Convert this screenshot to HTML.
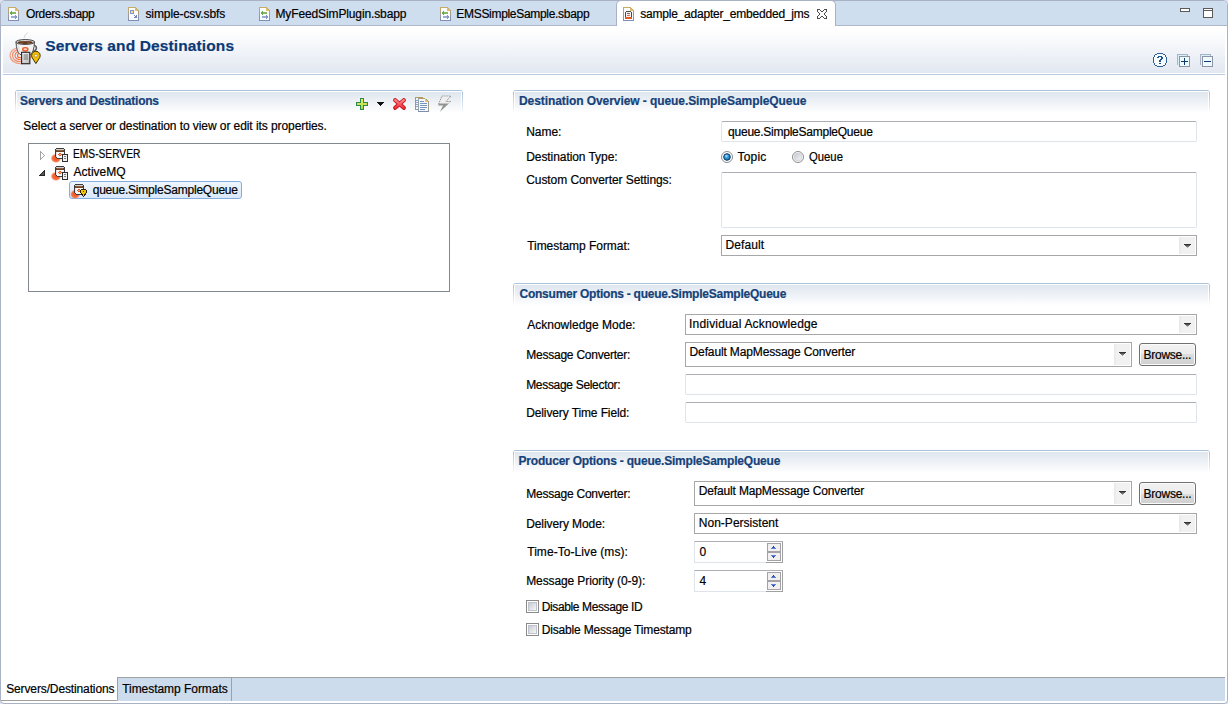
<!DOCTYPE html>
<html><head><meta charset="utf-8"><title>Servers and Destinations</title>
<style>
html,body{margin:0;padding:0;width:1228px;height:704px;overflow:hidden;background:#dfe3ee;position:relative;font-family:"Liberation Sans",sans-serif;font-size:12px;color:#000}
.a{position:absolute;box-sizing:border-box}
.t{position:absolute;white-space:nowrap;line-height:15px;font-size:12px;-webkit-text-stroke:0.2px currentColor}
svg{position:absolute;overflow:visible}
.sec{position:absolute;box-sizing:border-box;height:23px;border-top:1px solid #abc2db;border-radius:3px 3px 0 0;background:linear-gradient(90deg,#fff 0,#fff 2px,rgba(255,255,255,0) 2px,rgba(255,255,255,0) calc(100% - 2px),#fff calc(100% - 2px)),linear-gradient(#fff 0,#fff 1px,#dfe6ef 1px,#fff 22px)}
.sec:before,.sec:after{content:"";position:absolute;top:1px;width:1px;height:22px;background:linear-gradient(#a9c0da,rgba(169,192,218,0))}
.sec:before{left:0}.sec:after{right:0}
.tf{position:absolute;box-sizing:border-box;border:1px solid #dfe3ea;border-top-color:#abadb3;border-radius:2px;background:#fff}
.cb{position:absolute;box-sizing:border-box;border:1px solid #a7a7a7;background:#fff}
.dd{position:absolute;box-sizing:border-box;background:linear-gradient(90deg,#e8e8e8,#f1f1f1 3px,#f1f1f1)}
.btn{position:absolute;box-sizing:border-box;border:1px solid #707070;border-radius:3px;background:linear-gradient(#f2f2f2 0,#ebebeb 50%,#dddddd 50%,#cfcfcf 100%);box-shadow:inset 0 0 0 1px #fcfcfc}

</style></head><body>
<!-- frame -->
<div class="a" style="left:0;top:0;width:1228px;height:704px;border:1px solid #a9b1c5;border-radius:5px 5px 4px 4px;background:#fff"></div>
<!-- top tab bar -->
<div class="a" style="left:1px;top:1px;width:1226px;height:25px;background:#cfdeef;border-bottom:1px solid #aeb8cb;border-radius:4px 4px 0 0"></div>
<!-- active tab -->
<div class="a" style="left:616px;top:0;width:220px;height:26px;background:#fff;border:1px solid #a9b1c5;border-bottom:none;border-radius:5px 5px 0 0"></div>

<!-- tab icons -->
<svg style="left:8px;top:7px" width="11" height="14" viewBox="0 0 11 14" shape-rendering="crispEdges"><path d="M0 0h8v1h-8z" fill="#c8ac64"/><path d="M8 1h1v1h-1z" fill="#c4aa68"/><path d="M9 2h1v1h-1z" fill="#c0a96c"/><path d="M0 1h1v1h-1z" fill="#c2a96a"/><path d="M0 2h1v1h-1z" fill="#bca770"/><path d="M0 3h1v1h-1z" fill="#b7a577"/><path d="M10 3h1v1h-1z" fill="#b7a577"/><path d="M0 4h1v1h-1z" fill="#b1a27d"/><path d="M10 4h1v1h-1z" fill="#b1a27d"/><path d="M0 5h1v1h-1z" fill="#aca084"/><path d="M10 5h1v1h-1z" fill="#aca084"/><path d="M0 6h1v1h-1z" fill="#a69e8a"/><path d="M10 6h1v1h-1z" fill="#a69e8a"/><path d="M0 7h1v1h-1z" fill="#a19b91"/><path d="M10 7h1v1h-1z" fill="#a19b91"/><path d="M0 8h1v1h-1z" fill="#9b9997"/><path d="M10 8h1v1h-1z" fill="#9b9997"/><path d="M0 9h1v1h-1z" fill="#96979e"/><path d="M10 9h1v1h-1z" fill="#96979e"/><path d="M0 10h1v1h-1z" fill="#9094a4"/><path d="M10 10h1v1h-1z" fill="#9094a4"/><path d="M0 11h1v1h-1z" fill="#8b92ab"/><path d="M10 11h1v1h-1z" fill="#8b92ab"/><path d="M0 12h1v1h-1z" fill="#8590b1"/><path d="M10 12h1v1h-1z" fill="#8590b1"/><path d="M0 13h1v1h-1z" fill="#808eb8"/><path d="M10 13h1v1h-1z" fill="#808eb8"/><path d="M0 13h11v1h-11z" fill="#808eb8"/><path d="M1 1h7v12h-7z M8 2h1v11h-1z M9 3h1v10h-1z" fill="#fbfcff"/><path d="M7 1h1v3h-1z M8 2h1v2h-1z M9 3h1v1h-1z" fill="#e3be6a"/><path d="M3 4h1v4h-1z M2 5h1v2h-1z" fill="#6aa84c"/><path d="M4 5h4v2h-4z" fill="#82b85e"/><path d="M3 9h4v2h-4z" fill="#98acd4"/><path d="M7 8h1v4h-1z M8 9h1v2h-1z" fill="#7f98c8"/></svg>
<svg style="left:128px;top:7px" width="11" height="14" viewBox="0 0 11 14" shape-rendering="crispEdges"><path d="M0 0h8v1h-8z" fill="#c8ac64"/><path d="M8 1h1v1h-1z" fill="#c4aa68"/><path d="M9 2h1v1h-1z" fill="#c0a96c"/><path d="M0 1h1v1h-1z" fill="#c2a96a"/><path d="M0 2h1v1h-1z" fill="#bca770"/><path d="M0 3h1v1h-1z" fill="#b7a577"/><path d="M10 3h1v1h-1z" fill="#b7a577"/><path d="M0 4h1v1h-1z" fill="#b1a27d"/><path d="M10 4h1v1h-1z" fill="#b1a27d"/><path d="M0 5h1v1h-1z" fill="#aca084"/><path d="M10 5h1v1h-1z" fill="#aca084"/><path d="M0 6h1v1h-1z" fill="#a69e8a"/><path d="M10 6h1v1h-1z" fill="#a69e8a"/><path d="M0 7h1v1h-1z" fill="#a19b91"/><path d="M10 7h1v1h-1z" fill="#a19b91"/><path d="M0 8h1v1h-1z" fill="#9b9997"/><path d="M10 8h1v1h-1z" fill="#9b9997"/><path d="M0 9h1v1h-1z" fill="#96979e"/><path d="M10 9h1v1h-1z" fill="#96979e"/><path d="M0 10h1v1h-1z" fill="#9094a4"/><path d="M10 10h1v1h-1z" fill="#9094a4"/><path d="M0 11h1v1h-1z" fill="#8b92ab"/><path d="M10 11h1v1h-1z" fill="#8b92ab"/><path d="M0 12h1v1h-1z" fill="#8590b1"/><path d="M10 12h1v1h-1z" fill="#8590b1"/><path d="M0 13h1v1h-1z" fill="#808eb8"/><path d="M10 13h1v1h-1z" fill="#808eb8"/><path d="M0 13h11v1h-11z" fill="#808eb8"/><path d="M1 1h7v12h-7z M8 2h1v11h-1z M9 3h1v10h-1z" fill="#fbfcff"/><path d="M7 1h1v3h-1z M8 2h1v2h-1z M9 3h1v1h-1z" fill="#e3be6a"/><path d="M2 3h4v4h-4z" fill="#8398c6"/><path d="M3 4h2v2h-2z" fill="#f7da7a"/><path d="M6 8h1v1h-1z M8 8h1v1h-1z M7 9h2v1h-2z M6 10h3v1h-3z" fill="#6f86bd"/></svg>
<svg style="left:259px;top:7px" width="11" height="14" viewBox="0 0 11 14" shape-rendering="crispEdges"><path d="M0 0h8v1h-8z" fill="#c8ac64"/><path d="M8 1h1v1h-1z" fill="#c4aa68"/><path d="M9 2h1v1h-1z" fill="#c0a96c"/><path d="M0 1h1v1h-1z" fill="#c2a96a"/><path d="M0 2h1v1h-1z" fill="#bca770"/><path d="M0 3h1v1h-1z" fill="#b7a577"/><path d="M10 3h1v1h-1z" fill="#b7a577"/><path d="M0 4h1v1h-1z" fill="#b1a27d"/><path d="M10 4h1v1h-1z" fill="#b1a27d"/><path d="M0 5h1v1h-1z" fill="#aca084"/><path d="M10 5h1v1h-1z" fill="#aca084"/><path d="M0 6h1v1h-1z" fill="#a69e8a"/><path d="M10 6h1v1h-1z" fill="#a69e8a"/><path d="M0 7h1v1h-1z" fill="#a19b91"/><path d="M10 7h1v1h-1z" fill="#a19b91"/><path d="M0 8h1v1h-1z" fill="#9b9997"/><path d="M10 8h1v1h-1z" fill="#9b9997"/><path d="M0 9h1v1h-1z" fill="#96979e"/><path d="M10 9h1v1h-1z" fill="#96979e"/><path d="M0 10h1v1h-1z" fill="#9094a4"/><path d="M10 10h1v1h-1z" fill="#9094a4"/><path d="M0 11h1v1h-1z" fill="#8b92ab"/><path d="M10 11h1v1h-1z" fill="#8b92ab"/><path d="M0 12h1v1h-1z" fill="#8590b1"/><path d="M10 12h1v1h-1z" fill="#8590b1"/><path d="M0 13h1v1h-1z" fill="#808eb8"/><path d="M10 13h1v1h-1z" fill="#808eb8"/><path d="M0 13h11v1h-11z" fill="#808eb8"/><path d="M1 1h7v12h-7z M8 2h1v11h-1z M9 3h1v10h-1z" fill="#fbfcff"/><path d="M7 1h1v3h-1z M8 2h1v2h-1z M9 3h1v1h-1z" fill="#e3be6a"/><path d="M3 4h1v4h-1z M2 5h1v2h-1z" fill="#6aa84c"/><path d="M4 5h4v2h-4z" fill="#82b85e"/><path d="M3 9h4v2h-4z" fill="#98acd4"/><path d="M7 8h1v4h-1z M8 9h1v2h-1z" fill="#7f98c8"/></svg>
<svg style="left:440px;top:7px" width="11" height="14" viewBox="0 0 11 14" shape-rendering="crispEdges"><path d="M0 0h8v1h-8z" fill="#c8ac64"/><path d="M8 1h1v1h-1z" fill="#c4aa68"/><path d="M9 2h1v1h-1z" fill="#c0a96c"/><path d="M0 1h1v1h-1z" fill="#c2a96a"/><path d="M0 2h1v1h-1z" fill="#bca770"/><path d="M0 3h1v1h-1z" fill="#b7a577"/><path d="M10 3h1v1h-1z" fill="#b7a577"/><path d="M0 4h1v1h-1z" fill="#b1a27d"/><path d="M10 4h1v1h-1z" fill="#b1a27d"/><path d="M0 5h1v1h-1z" fill="#aca084"/><path d="M10 5h1v1h-1z" fill="#aca084"/><path d="M0 6h1v1h-1z" fill="#a69e8a"/><path d="M10 6h1v1h-1z" fill="#a69e8a"/><path d="M0 7h1v1h-1z" fill="#a19b91"/><path d="M10 7h1v1h-1z" fill="#a19b91"/><path d="M0 8h1v1h-1z" fill="#9b9997"/><path d="M10 8h1v1h-1z" fill="#9b9997"/><path d="M0 9h1v1h-1z" fill="#96979e"/><path d="M10 9h1v1h-1z" fill="#96979e"/><path d="M0 10h1v1h-1z" fill="#9094a4"/><path d="M10 10h1v1h-1z" fill="#9094a4"/><path d="M0 11h1v1h-1z" fill="#8b92ab"/><path d="M10 11h1v1h-1z" fill="#8b92ab"/><path d="M0 12h1v1h-1z" fill="#8590b1"/><path d="M10 12h1v1h-1z" fill="#8590b1"/><path d="M0 13h1v1h-1z" fill="#808eb8"/><path d="M10 13h1v1h-1z" fill="#808eb8"/><path d="M0 13h11v1h-11z" fill="#808eb8"/><path d="M1 1h7v12h-7z M8 2h1v11h-1z M9 3h1v10h-1z" fill="#fbfcff"/><path d="M7 1h1v3h-1z M8 2h1v2h-1z M9 3h1v1h-1z" fill="#e3be6a"/><path d="M3 4h1v4h-1z M2 5h1v2h-1z" fill="#6aa84c"/><path d="M4 5h4v2h-4z" fill="#82b85e"/><path d="M3 9h4v2h-4z" fill="#98acd4"/><path d="M7 8h1v4h-1z M8 9h1v2h-1z" fill="#7f98c8"/></svg>
<svg style="left:623px;top:7px" width="11" height="14" viewBox="0 0 11 14" shape-rendering="crispEdges"><path d="M0 0h8v1h-8z" fill="#c8ac64"/><path d="M8 1h1v1h-1z" fill="#c4aa68"/><path d="M9 2h1v1h-1z" fill="#c0a96c"/><path d="M0 1h1v1h-1z" fill="#c2a96a"/><path d="M0 2h1v1h-1z" fill="#bca770"/><path d="M0 3h1v1h-1z" fill="#b7a577"/><path d="M10 3h1v1h-1z" fill="#b7a577"/><path d="M0 4h1v1h-1z" fill="#b1a27d"/><path d="M10 4h1v1h-1z" fill="#b1a27d"/><path d="M0 5h1v1h-1z" fill="#aca084"/><path d="M10 5h1v1h-1z" fill="#aca084"/><path d="M0 6h1v1h-1z" fill="#a69e8a"/><path d="M10 6h1v1h-1z" fill="#a69e8a"/><path d="M0 7h1v1h-1z" fill="#a19b91"/><path d="M10 7h1v1h-1z" fill="#a19b91"/><path d="M0 8h1v1h-1z" fill="#9b9997"/><path d="M10 8h1v1h-1z" fill="#9b9997"/><path d="M0 9h1v1h-1z" fill="#96979e"/><path d="M10 9h1v1h-1z" fill="#96979e"/><path d="M0 10h1v1h-1z" fill="#9094a4"/><path d="M10 10h1v1h-1z" fill="#9094a4"/><path d="M0 11h1v1h-1z" fill="#8b92ab"/><path d="M10 11h1v1h-1z" fill="#8b92ab"/><path d="M0 12h1v1h-1z" fill="#8590b1"/><path d="M10 12h1v1h-1z" fill="#8590b1"/><path d="M0 13h1v1h-1z" fill="#808eb8"/><path d="M10 13h1v1h-1z" fill="#808eb8"/><path d="M0 13h11v1h-11z" fill="#808eb8"/><path d="M1 1h7v12h-7z M8 2h1v11h-1z M9 3h1v10h-1z" fill="#fbfcff"/><path d="M7 1h1v3h-1z M8 2h1v2h-1z M9 3h1v1h-1z" fill="#e3be6a"/><path d="M3 4h5v1h-5z M2 5h1v5h-1z M8 5h1v5h-1z M3 10h5v1h-5z" fill="#4a4a4a"/><path d="M3 5h5v5h-5z" fill="#f2f2f2"/><path d="M4 6h3v1h-3z" fill="#8c6a4a"/><path d="M4 8h3v1h-3z" fill="#ea6a3a"/><path d="M2 10h7v2h-7z" fill="#e35d22"/></svg>
<!-- close X -->
<svg style="left:817px;top:9px" width="10" height="10" viewBox="0 0 10 10" shape-rendering="crispEdges"><path d="M0 0h3v1h-3z M7 0h3v1h-3z M0 1h1v1h-1z M3 1h1v1h-1z M6 1h1v1h-1z M9 1h1v1h-1z M0 2h1v1h-1z M4 2h2v1h-2z M9 2h1v1h-1z M1 3h1v1h-1z M8 3h1v1h-1z M2 4h1v2h-1z M7 4h1v2h-1z M1 6h1v1h-1z M8 6h1v1h-1z M0 7h1v1h-1z M4 7h2v1h-2z M9 7h1v1h-1z M0 8h1v1h-1z M3 8h1v1h-1z M6 8h1v1h-1z M9 8h1v1h-1z M0 9h3v1h-3z M7 9h3v1h-3z" fill="#4d4d4d"/></svg>
<!-- min / max -->
<div class="a" style="left:1180px;top:8px;width:10px;height:4px;border:1px solid #5a5a5a;background:#fff"></div>
<div class="a" style="left:1203px;top:8px;width:10px;height:10px;border:1px solid #5a5a5a;border-top-width:3px;background:#fff"></div>
<div class="a" style="left:1204px;top:9px;width:8px;height:1px;background:#fff"></div>

<!-- form header -->
<div class="a" style="left:3px;top:26px;width:1222px;height:47px;background:linear-gradient(#fff 0,#fdfdfe 15%,#e2e8f1 100%)"></div>
<div class="a" style="left:3px;top:74px;width:1222px;height:1px;background:#b8cbe0"></div>

<!-- header icon -->
<svg style="left:8px;top:30px" width="36" height="36" viewBox="0 0 36 36">
 <g fill="none" stroke="#f0612e" stroke-width="1.1">
  <ellipse cx="12.5" cy="25.5" rx="3" ry="2.3" opacity="0.95"/>
  <ellipse cx="12.5" cy="25.5" rx="5.5" ry="4.3" opacity="0.85"/>
  <ellipse cx="12.5" cy="25.5" rx="8" ry="6.3" opacity="0.75"/>
  <ellipse cx="12.5" cy="25.5" rx="10.4" ry="8.2" opacity="0.6"/>
 </g>
 <path d="M24.5 15.5 Q28.5 15.5 28.2 18.3 Q28 21 24 21" fill="none" stroke="#5a5a5a" stroke-width="2"/>
 <path d="M24.5 15.5 Q27.5 15.8 27.3 18.3 Q27 20.3 24 20.4" fill="none" stroke="#f4f4f4" stroke-width="0.8"/>
 <path d="M8 12 Q8.5 22 12 24.5 Q17 26 22.5 24.5 Q26 22 26.5 12 Z" fill="#f3f3f3" stroke="#4d4d4d" stroke-width="1"/>
 <path d="M10 14 Q10.5 21 13 23" fill="none" stroke="#ddd" stroke-width="1"/>
 <ellipse cx="17.2" cy="12" rx="9.4" ry="2.4" fill="#ececec" stroke="#3d3d3d" stroke-width="1"/>
 <ellipse cx="17.2" cy="12.4" rx="7.6" ry="1.5" fill="#5e3318"/>
 <path d="M12 12.2 Q17 11 22 12.6" fill="none" stroke="#9a6a48" stroke-width="0.6"/>
 <path d="M16 8 Q16.5 5 19.5 2.5" fill="none" stroke="#cfcfcf" stroke-width="0.9"/>
 <ellipse cx="17.3" cy="19.3" rx="2.6" ry="1.7" fill="#fbd9c8" stroke="#ee5522" stroke-width="1.4"/>
 <defs><linearGradient id="dg" x1="0" y1="0" x2="1" y2="1"><stop offset="0" stop-color="#ffffff"/><stop offset="1" stop-color="#b5b5b5"/></linearGradient></defs>
 <rect x="13.6" y="22.3" width="8.2" height="11.4" fill="url(#dg)" stroke="#2e2e2e" stroke-width="1.2"/>
 <path d="M15.5 25H20M15.5 27H20M15.5 29H20" stroke="#6e6e6e" stroke-width="1"/>
 <path d="M27.9 33.6 L24.1 27.6 A4.3 4.3 0 1 1 31.7 27.6 Z" fill="#f2be00" stroke="#3b3000" stroke-width="1" stroke-linejoin="round"/>
 <circle cx="27.9" cy="25.7" r="1.4" fill="#fdfdf6" stroke="#8a6a10" stroke-width="0.5"/>
</svg>

<!-- help / expand / collapse -->
<svg style="left:1151px;top:51px" width="18" height="18" viewBox="0 0 18 18" shape-rendering="crispEdges"><path d="M6 3h6v1h-6z M4 4h10v2h-10z M3 6h12v6h-12z M4 12h10v2h-10z M6 14h6v1h-6z" fill="#f8fbfe"/><path d="M6 2h6v1h-6z M4 3h2v1h-2z M12 3h2v1h-2z M3 4h1v2h-1z M14 4h1v2h-1z M2 6h1v6h-1z M15 6h1v6h-1z M3 12h1v2h-1z M14 12h1v2h-1z M4 14h2v1h-2z M12 14h2v1h-2z M6 15h6v1h-6z" fill="#2d5f95"/><path d="M7 5h4v1h-4z M6 6h2v1h-2z M10 6h2v1h-2z M10 7h2v1h-2z M9 8h2v1h-2z M8 9h2v1h-2z M8 10h2v1h-2z M8 12h2v1h-2z" fill="#1d5590"/></svg>
<svg style="left:1175px;top:52px" width="18" height="18" viewBox="0 0 18 18" shape-rendering="crispEdges"><path d="M2 2h11v1h-11z M2 3h1v10h-1z M12 3h1v1h-1z M2 12h2v1h-2z" fill="#aab3c3"/><path d="M3 3h9v10h-9z" fill="#d9f1fb"/><path d="M4 4h11v1h-11z M4 5h1v10h-1z M14 5h1v10h-1z M4 14h11v1h-11z" fill="#8c93a3"/><path d="M5 5h9v9h-9z" fill="#effafe"/><path d="M6 9h7v1h-7z" fill="#0b3c6c"/><path d="M9 6h1v7h-1z" fill="#0b3c6c"/></svg>
<svg style="left:1198px;top:52px" width="18" height="18" viewBox="0 0 18 18" shape-rendering="crispEdges"><path d="M2 2h11v1h-11z M2 3h1v10h-1z M12 3h1v1h-1z M2 12h2v1h-2z" fill="#aab3c3"/><path d="M3 3h9v10h-9z" fill="#d9f1fb"/><path d="M4 4h11v1h-11z M4 5h1v10h-1z M14 5h1v10h-1z M4 14h11v1h-11z" fill="#8c93a3"/><path d="M5 5h9v9h-9z" fill="#effafe"/><path d="M6 9h7v1h-7z" fill="#0b3c6c"/></svg>

<!-- left section -->
<div class="sec" style="left:15px;top:90px;width:448px"></div>
<!-- toolbar icons -->
<svg style="left:356px;top:98px" width="12" height="12" viewBox="0 0 12 12" shape-rendering="crispEdges">
 <defs><linearGradient id="gp" x1="0" y1="0" x2="0" y2="1"><stop offset="0" stop-color="#eef060"/><stop offset="1" stop-color="#a9d450"/></linearGradient></defs>
 <path d="M4 0H8V4H12V8H8V12H4V8H0V4H4Z" fill="#2f8a46"/>
 <path d="M5 1H7V5H11V7H7V11H5V7H1V5H5Z" fill="url(#gp)"/>
</svg>
<svg style="left:377px;top:102px" width="8" height="5" viewBox="0 0 8 5" shape-rendering="crispEdges">
 <path d="M0 0h7v1h-7z M1 1h5v1h-5z M2 2h3v1h-3z M3 3h1v1h-1z" fill="#111"/>
</svg>
<svg style="left:392px;top:97px" width="15" height="14" viewBox="0 0 15 14">
 <defs><linearGradient id="rx" x1="0" y1="0" x2="0" y2="1"><stop offset="0" stop-color="#ff8a8a"/><stop offset="1" stop-color="#e8303c"/></linearGradient></defs>
 <path d="M3.2 3.2L11.8 10.8M11.8 3.2L3.2 10.8" stroke="#c8101c" stroke-width="4.2" stroke-linecap="round"/>
 <path d="M3.2 3.2L11.8 10.8M11.8 3.2L3.2 10.8" stroke="url(#rx)" stroke-width="2.4" stroke-linecap="round"/>
</svg>
<svg style="left:415px;top:97px" width="14" height="15" viewBox="0 0 14 15" shape-rendering="crispEdges">
 <path d="M0 0h8v1h-8z" fill="#b49a5e"/>
 <path d="M0 1h1v12h-1z M0 12h4v1h-4z" fill="#8e98ae"/>
 <path d="M1 1h3v11h-3z" fill="#eef7fb"/>
 <path d="M1 3h2v1h-2z M1 5h2v1h-2z M1 7h2v1h-2z M1 9h2v1h-2z" fill="#8aa4cc"/>
 <path d="M3 1h7v1h-7z M10 2h1v1h-1z" fill="#b49a5e"/>
 <path d="M3 1h1v13h-1z" fill="#9aa0a8"/>
 <path d="M3 14h11v1h-11z" fill="#7f8db0"/><path d="M13 4h1v10h-1z" fill="#a09a84"/>
 <path d="M4 2h6v12h-6z M10 3h1v11h-1z M11 4h2v10h-2z" fill="#f4f9fc"/>
 <path d="M10 2h1v1h-1z M10 3h2v1h-2z M10 4h3v1h-3z" fill="#e2c070"/>
 <path d="M11 2h1v1h-1z M12 3h1v1h-1z" fill="#b49a5e"/>
 <path d="M5 4h4v1h-4z M5 6h7v1h-7z M5 8h7v1h-7z M5 10h7v1h-7z M5 12h5v1h-5z" fill="#7892c2"/>
</svg>
<svg style="left:437px;top:95px" width="16" height="18" viewBox="0 0 16 18">
 <path d="M5 1H14L9 6.5H14L3 16.7L6 10.5H1Z" fill="#929292"/>
 <path d="M5 1H14L9 6.5H14L11.9 8.6H1.8Z" fill="#efefef"/>
 <path d="M1.6 9L5 1H14L9 6.5H14" fill="none" stroke="#8a8a8a" stroke-width="0.9" stroke-dasharray="1.2 1"/>
</svg>

<!-- tree box -->
<div class="a" style="left:28px;top:143px;width:422px;height:149px;border:1px solid #828790;background:#fff"></div>
<!-- expanders -->
<svg style="left:40px;top:151px" width="6" height="9" viewBox="0 0 6 9" shape-rendering="crispEdges"><path d="M0 0h1v9h-1z M1 1h1v1h-1z M2 2h1v1h-1z M3 3h1v1h-1z M4 4h1v1h-1z M3 5h1v1h-1z M2 6h1v1h-1z M1 7h1v1h-1z" fill="#a3a3a3"/></svg>
<svg style="left:39px;top:170px" width="6" height="6" viewBox="0 0 6 6" shape-rendering="crispEdges"><path d="M5 0h1v6h-1z M4 1h1v1h-1z M3 2h1v1h-1z M2 3h1v1h-1z M1 4h1v1h-1z M0 5h5v1h-5z" fill="#262626"/><path d="M4 2h1v3h-1z M3 3h1v2h-1z M2 4h1v1h-1z" fill="#5a5a5a"/></svg>
<!-- selection -->
<div class="a" style="left:69px;top:181px;width:173px;height:18px;border:1px solid #84acdd;border-radius:3px;background:linear-gradient(#eef5fd,#d9e8fb)"></div>

<!-- tree icons -->
<svg style="left:51px;top:146px" width="18" height="17" viewBox="0 0 18 17" shape-rendering="crispEdges"><defs><radialGradient id="bl1" cx="0.5" cy="0.5" r="0.5"><stop offset="0" stop-color="#f04c18" stop-opacity="1"/><stop offset="0.7" stop-color="#f26535" stop-opacity="0.9"/><stop offset="1" stop-color="#f7a080" stop-opacity="0.35"/></radialGradient></defs><ellipse cx="5" cy="12.3" rx="5.2" ry="4.6" fill="url(#bl1)" shape-rendering="auto"/><path d="M5 3h8v9h-8z" fill="#f6f8f9"/><path d="M5 2h8v1h-8z M4 3h1v8h-1z M5 11h1v1h-1z M6 12h6v1h-6z M13 3h1v5h-1z M12 11h1v1h-1z" fill="#3c3c3c"/><path d="M5 3h8v1h-8z" fill="#cfcfcf"/><path d="M5 4h8v2h-8z" fill="#6e4424"/><path d="M6 4h6v1h-6z" fill="#8f6040"/><path d="M8 7h2v1h-2z M7 8h4v1h-4z M8 9h2v1h-2z" fill="#ee5520"/><path d="M8 8h2v1h-2z" fill="#f7a07a"/><path d="M5 6h1v5h-1z" fill="#dfe6ea"/><path d="M11 8h6v8h-6z" fill="#2e2e2e"/><path d="M12 9h4v6h-4z" fill="#f0f0f0"/><path d="M13 10h2v1h-2z M13 12h2v1h-2z" fill="#7a7a7a"/></svg>
<svg style="left:51px;top:164px" width="18" height="17" viewBox="0 0 18 17" shape-rendering="crispEdges"><defs><radialGradient id="bl2" cx="0.5" cy="0.5" r="0.5"><stop offset="0" stop-color="#f04c18" stop-opacity="1"/><stop offset="0.7" stop-color="#f26535" stop-opacity="0.9"/><stop offset="1" stop-color="#f7a080" stop-opacity="0.35"/></radialGradient></defs><ellipse cx="5" cy="12.3" rx="5.2" ry="4.6" fill="url(#bl2)" shape-rendering="auto"/><path d="M5 3h8v9h-8z" fill="#f6f8f9"/><path d="M5 2h8v1h-8z M4 3h1v8h-1z M5 11h1v1h-1z M6 12h6v1h-6z M13 3h1v5h-1z M12 11h1v1h-1z" fill="#3c3c3c"/><path d="M5 3h8v1h-8z" fill="#cfcfcf"/><path d="M5 4h8v2h-8z" fill="#6e4424"/><path d="M6 4h6v1h-6z" fill="#8f6040"/><path d="M8 7h2v1h-2z M7 8h4v1h-4z M8 9h2v1h-2z" fill="#ee5520"/><path d="M8 8h2v1h-2z" fill="#f7a07a"/><path d="M5 6h1v5h-1z" fill="#dfe6ea"/><path d="M11 8h6v8h-6z" fill="#2e2e2e"/><path d="M12 9h4v6h-4z" fill="#f0f0f0"/><path d="M13 10h2v1h-2z M13 12h2v1h-2z" fill="#7a7a7a"/></svg>
<svg style="left:71px;top:182px" width="18" height="17" viewBox="0 0 18 17" shape-rendering="crispEdges"><defs><radialGradient id="bl3" cx="0.5" cy="0.5" r="0.5"><stop offset="0" stop-color="#f04c18" stop-opacity="1"/><stop offset="0.7" stop-color="#f26535" stop-opacity="0.9"/><stop offset="1" stop-color="#f7a080" stop-opacity="0.35"/></radialGradient></defs><ellipse cx="4.2" cy="12.3" rx="5" ry="4.6" fill="url(#bl3)" shape-rendering="auto"/><path d="M4 3h8v9h-8z" fill="#f6f8f9"/><path d="M4 2h8v1h-8z M3 3h1v8h-1z M4 11h1v1h-1z M5 12h6v1h-6z M12 3h1v5h-1z M11 11h1v1h-1z" fill="#3c3c3c"/><path d="M4 3h8v1h-8z" fill="#cfcfcf"/><path d="M4 4h8v2h-8z" fill="#6e4424"/><path d="M5 4h6v1h-6z" fill="#8f6040"/><path d="M7 7h2v1h-2z M6 8h4v1h-4z M7 9h2v1h-2z" fill="#ee5520"/><path d="M7 8h2v1h-2z" fill="#f7a07a"/><path d="M4 6h1v5h-1z" fill="#dfe6ea"/><path d="M10 7h5v1h-5z M9 8h1v3h-1z M15 8h1v3h-1z M10 11h1v1h-1z M14 11h1v1h-1z M10 12h2v1h-2z M13 12h2v1h-2z M11 13h1v1h-1z M13 13h1v1h-1z M12 14h1v1h-1z" fill="#2a2200"/><path d="M10 8h5v3h-5z M11 11h3v1h-3z M12 12h1v2h-1z" fill="#f6c400"/><path d="M12 9h1v1h-1z" fill="#5a3a10"/></svg>

<!-- right sections -->
<div class="sec" style="left:513px;top:90px;width:697px"></div>
<div class="sec" style="left:513px;top:283px;width:697px"></div>
<div class="sec" style="left:513px;top:450px;width:697px"></div>

<!-- destination overview fields -->
<div class="tf" style="left:721px;top:121px;width:476px;height:21px"></div>
<!-- radios -->
<svg style="left:721px;top:151px" width="12" height="12" viewBox="0 0 12 12">
 <defs>
  <linearGradient id="rg" x1="0" y1="0" x2="1" y2="1"><stop offset="0" stop-color="#c4c9d2"/><stop offset="1" stop-color="#f6f6f6"/></linearGradient>
  <radialGradient id="rb" cx="0.4" cy="0.35" r="0.65"><stop offset="0" stop-color="#b8ecff"/><stop offset="0.45" stop-color="#2c9ae0"/><stop offset="1" stop-color="#1a70b8"/></radialGradient>
 </defs>
 <circle cx="6" cy="6" r="5.5" fill="#fff" stroke="#8c8c8c"/>
 <circle cx="6" cy="6" r="3.3" fill="url(#rb)" stroke="#14375c" stroke-width="1"/>
</svg>
<svg style="left:792px;top:151px" width="12" height="12" viewBox="0 0 12 12">
 <circle cx="6" cy="6" r="5.5" fill="#fff" stroke="#8c8c8c"/>
 <circle cx="6" cy="6" r="3.9" fill="url(#rg)" stroke="#c9ced6" stroke-width="0.8"/>
</svg>
<div class="tf" style="left:721px;top:172px;width:476px;height:56px"></div>
<!-- timestamp combo -->
<div class="cb" style="left:721px;top:235px;width:476px;height:21px"></div>
<div class="dd" style="left:1179px;top:237px;width:16px;height:17px"></div>
<svg style="left:1184px;top:244px" width="8" height="5" viewBox="0 0 8 5" shape-rendering="crispEdges"><path d="M0 0h7v1h-7z" fill="#333333"/><path d="M1 1h5v1h-5z" fill="#555555"/><path d="M2 2h3v1h-3z" fill="#7a7a7a"/><path d="M3 3h1v1h-1z" fill="#a6a6a6"/></svg>

<!-- consumer fields -->
<div class="cb" style="left:685px;top:314px;width:512px;height:21px"></div>
<div class="dd" style="left:1179px;top:316px;width:16px;height:17px"></div>
<svg style="left:1184px;top:323px" width="8" height="5" viewBox="0 0 8 5" shape-rendering="crispEdges"><path d="M0 0h7v1h-7z" fill="#333333"/><path d="M1 1h5v1h-5z" fill="#555555"/><path d="M2 2h3v1h-3z" fill="#7a7a7a"/><path d="M3 3h1v1h-1z" fill="#a6a6a6"/></svg>
<div class="cb" style="left:685px;top:342px;width:447px;height:25px"></div>
<div class="dd" style="left:1114px;top:344px;width:16px;height:21px"></div>
<svg style="left:1119px;top:352px" width="8" height="5" viewBox="0 0 8 5" shape-rendering="crispEdges"><path d="M0 0h7v1h-7z" fill="#333333"/><path d="M1 1h5v1h-5z" fill="#555555"/><path d="M2 2h3v1h-3z" fill="#7a7a7a"/><path d="M3 3h1v1h-1z" fill="#a6a6a6"/></svg>
<div class="btn" style="left:1139px;top:343px;width:57px;height:23px"></div>
<div class="tf" style="left:685px;top:374px;width:512px;height:21px"></div>
<div class="tf" style="left:685px;top:402px;width:512px;height:21px"></div>

<!-- producer fields -->
<div class="cb" style="left:694px;top:481px;width:438px;height:25px"></div>
<div class="dd" style="left:1114px;top:483px;width:16px;height:21px"></div>
<svg style="left:1119px;top:491px" width="8" height="5" viewBox="0 0 8 5" shape-rendering="crispEdges"><path d="M0 0h7v1h-7z" fill="#333333"/><path d="M1 1h5v1h-5z" fill="#555555"/><path d="M2 2h3v1h-3z" fill="#7a7a7a"/><path d="M3 3h1v1h-1z" fill="#a6a6a6"/></svg>
<div class="btn" style="left:1139px;top:482px;width:57px;height:23px"></div>
<div class="cb" style="left:694px;top:513px;width:503px;height:21px"></div>
<div class="dd" style="left:1179px;top:515px;width:16px;height:17px"></div>
<svg style="left:1184px;top:522px" width="8" height="5" viewBox="0 0 8 5" shape-rendering="crispEdges"><path d="M0 0h7v1h-7z" fill="#333333"/><path d="M1 1h5v1h-5z" fill="#555555"/><path d="M2 2h3v1h-3z" fill="#7a7a7a"/><path d="M3 3h1v1h-1z" fill="#a6a6a6"/></svg>
<!-- spinners -->
<div class="tf" style="left:694px;top:541px;width:89px;height:22px;border-right-color:#a0a0a0;border-radius:0"></div>
<div class="a" style="left:766px;top:562px;width:17px;height:1px;background:#a0a0a0"></div>
<svg style="left:767px;top:543px" width="14" height="18" viewBox="0 0 14 18">
 <rect x="0.5" y="0.5" width="13" height="8" fill="#f0f0f0" stroke="#a3a3a7"/>
 <rect x="0.5" y="9.5" width="13" height="8" fill="#f0f0f0" stroke="#a3a3a7"/>
 <path d="M6 3h1v1h-1z" fill="#2c3c7a" shape-rendering="crispEdges"/><path d="M5 4h3v1h-3z" fill="#3d56b0" shape-rendering="crispEdges"/><path d="M4 5h5v1h-5z" fill="#5c7ee0" shape-rendering="crispEdges"/>
 <path d="M4 12h5v1h-5z" fill="#5c7ee0" shape-rendering="crispEdges"/><path d="M5 13h3v1h-3z" fill="#3d56b0" shape-rendering="crispEdges"/><path d="M6 14h1v1h-1z" fill="#2c3c7a" shape-rendering="crispEdges"/>
</svg>
<div class="tf" style="left:694px;top:570px;width:89px;height:22px;border-right-color:#a0a0a0;border-radius:0"></div>
<div class="a" style="left:766px;top:591px;width:17px;height:1px;background:#a0a0a0"></div>
<svg style="left:767px;top:572px" width="14" height="18" viewBox="0 0 14 18">
 <rect x="0.5" y="0.5" width="13" height="8" fill="#f0f0f0" stroke="#a3a3a7"/>
 <rect x="0.5" y="9.5" width="13" height="8" fill="#f0f0f0" stroke="#a3a3a7"/>
 <path d="M6 3h1v1h-1z" fill="#2c3c7a" shape-rendering="crispEdges"/><path d="M5 4h3v1h-3z" fill="#3d56b0" shape-rendering="crispEdges"/><path d="M4 5h5v1h-5z" fill="#5c7ee0" shape-rendering="crispEdges"/>
 <path d="M4 12h5v1h-5z" fill="#5c7ee0" shape-rendering="crispEdges"/><path d="M5 13h3v1h-3z" fill="#3d56b0" shape-rendering="crispEdges"/><path d="M6 14h1v1h-1z" fill="#2c3c7a" shape-rendering="crispEdges"/>
</svg>
<!-- checkboxes -->
<svg style="left:526px;top:600px" width="13" height="13" viewBox="0 0 13 13" shape-rendering="crispEdges"><defs><linearGradient id="ck" x1="0" y1="0" x2="1" y2="1"><stop offset="0" stop-color="#c6cad2"/><stop offset="1" stop-color="#f7f7f7"/></linearGradient></defs><path d="M0 0h13v1h-13z M0 12h13v1h-13z M0 1h1v11h-1z M12 1h1v11h-1z" fill="#8a8a8a"/><path d="M1 1h11v11h-11z" fill="#fff"/><path d="M2 2h9v9h-9z" fill="#bfc4cc"/><rect x="3" y="3" width="7" height="7" fill="url(#ck)"/></svg>
<svg style="left:526px;top:623px" width="13" height="13" viewBox="0 0 13 13" shape-rendering="crispEdges"><defs><linearGradient id="ck" x1="0" y1="0" x2="1" y2="1"><stop offset="0" stop-color="#c6cad2"/><stop offset="1" stop-color="#f7f7f7"/></linearGradient></defs><path d="M0 0h13v1h-13z M0 12h13v1h-13z M0 1h1v11h-1z M12 1h1v11h-1z" fill="#8a8a8a"/><path d="M1 1h11v11h-11z" fill="#fff"/><path d="M2 2h9v9h-9z" fill="#bfc4cc"/><rect x="3" y="3" width="7" height="7" fill="url(#ck)"/></svg>

<!-- bottom tab bar -->
<div class="a" style="left:1px;top:677px;width:1224px;height:24px;background:#cddcec;border-top:1px solid #a0a0a0"></div>
<div class="a" style="left:1px;top:677px;width:117px;height:24px;background:#fff;border-right:1px solid #a0a0a0;border-bottom:1px solid #a0a0a0;border-radius:0 0 2px 0"></div>
<div class="a" style="left:231px;top:678px;width:1px;height:23px;background:#a0a0a0"></div>

<div class="t" style="left:26.0px;top:7px;letter-spacing:-0.364px;">Orders.sbapp</div>
<div class="t" style="left:145.4px;top:7px;letter-spacing:-0.086px;">simple-csv.sbfs</div>
<div class="t" style="left:275.5px;top:7px;letter-spacing:-0.125px;">MyFeedSimPlugin.sbapp</div>
<div class="t" style="left:456.3px;top:7px;letter-spacing:-0.305px;">EMSSimpleSample.sbapp</div>
<div class="t" style="left:640.2px;top:7px;letter-spacing:-0.208px;">sample_adapter_embedded_jms</div>
<div class="t" style="left:45.2px;top:36px;font-weight:bold;font-size:15.5px;line-height:20px;color:#0b3a76;letter-spacing:0.122px;">Servers and Destinations</div>
<div class="t" style="left:20.1px;top:94px;font-weight:bold;color:#154279;letter-spacing:-0.222px;">Servers and Destinations</div>
<div class="t" style="left:519.0px;top:94px;font-weight:bold;color:#154279;letter-spacing:-0.076px;">Destination Overview - queue.SimpleSampleQueue</div>
<div class="t" style="left:519.5px;top:287px;font-weight:bold;color:#154279;letter-spacing:-0.241px;">Consumer Options - queue.SimpleSampleQueue</div>
<div class="t" style="left:518.5px;top:454px;font-weight:bold;color:#154279;letter-spacing:-0.2px;">Producer Options - queue.SimpleSampleQueue</div>
<div class="t" style="left:23.3px;top:119px;letter-spacing:-0.075px;">Select a server or destination to view or edit its properties.</div>
<div class="t" style="left:72.65px;top:147px;transform:scaleX(0.8513);transform-origin:0 0;">EMS-SERVER</div>
<div class="t" style="left:73.5px;top:165px;letter-spacing:0.014px;">ActiveMQ</div>
<div class="t" style="left:92.7px;top:183px;letter-spacing:-0.218px;">queue.SimpleSampleQueue</div>
<div class="t" style="left:526.2px;top:125px;letter-spacing:-0.025px;">Name:</div>
<div class="t" style="left:526.2px;top:150px;letter-spacing:-0.069px;">Destination Type:</div>
<div class="t" style="left:526.2px;top:173px;letter-spacing:-0.068px;">Custom Converter Settings:</div>
<div class="t" style="left:527.2px;top:239px;letter-spacing:-0.044px;">Timestamp Format:</div>
<div class="t" style="left:728.1px;top:125px;letter-spacing:-0.245px;">queue.SimpleSampleQueue</div>
<div class="t" style="left:737.6px;top:150px;letter-spacing:0.175px;">Topic</div>
<div class="t" style="left:808.6px;top:150px;transform:scaleX(0.9417);transform-origin:0 0;">Queue</div>
<div class="t" style="left:725.5px;top:238px;letter-spacing:0.083px;">Default</div>
<div class="t" style="left:527.2px;top:318px;letter-spacing:0.012px;">Acknowledge Mode:</div>
<div class="t" style="left:526.2px;top:348px;letter-spacing:-0.224px;">Message Converter:</div>
<div class="t" style="left:526.2px;top:378px;letter-spacing:-0.312px;">Message Selector:</div>
<div class="t" style="left:526.2px;top:406px;letter-spacing:-0.111px;">Delivery Time Field:</div>
<div class="t" style="left:689.1px;top:317px;letter-spacing:0.176px;">Individual Acknowledge</div>
<div class="t" style="left:689.6px;top:345px;letter-spacing:-0.137px;">Default MapMessage Converter</div>
<div class="t" style="left:1143.5px;top:348px;letter-spacing:-0.262px;">Browse...</div>
<div class="t" style="left:526.2px;top:487px;letter-spacing:-0.218px;">Message Converter:</div>
<div class="t" style="left:526.2px;top:517px;letter-spacing:-0.085px;">Delivery Mode:</div>
<div class="t" style="left:527.2px;top:545px;letter-spacing:0.065px;">Time-To-Live (ms):</div>
<div class="t" style="left:526.2px;top:574px;letter-spacing:-0.105px;">Message Priority (0-9):</div>
<div class="t" style="left:541.7px;top:600px;letter-spacing:-0.376px;">Disable Message ID</div>
<div class="t" style="left:541.7px;top:623px;letter-spacing:-0.171px;">Disable Message Timestamp</div>
<div class="t" style="left:698.8px;top:484px;letter-spacing:-0.148px;">Default MapMessage Converter</div>
<div class="t" style="left:698.8px;top:516px;letter-spacing:0.015px;">Non-Persistent</div>
<div class="t" style="left:699.6px;top:545px;">0</div>
<div class="t" style="left:699.6px;top:574px;">4</div>
<div class="t" style="left:1143.6px;top:487px;letter-spacing:-0.25px;">Browse...</div>
<div class="t" style="left:6.2px;top:682px;letter-spacing:-0.126px;">Servers/Destinations</div>
<div class="t" style="left:122.2px;top:682px;letter-spacing:-0.044px;">Timestamp Formats</div>
</body></html>
